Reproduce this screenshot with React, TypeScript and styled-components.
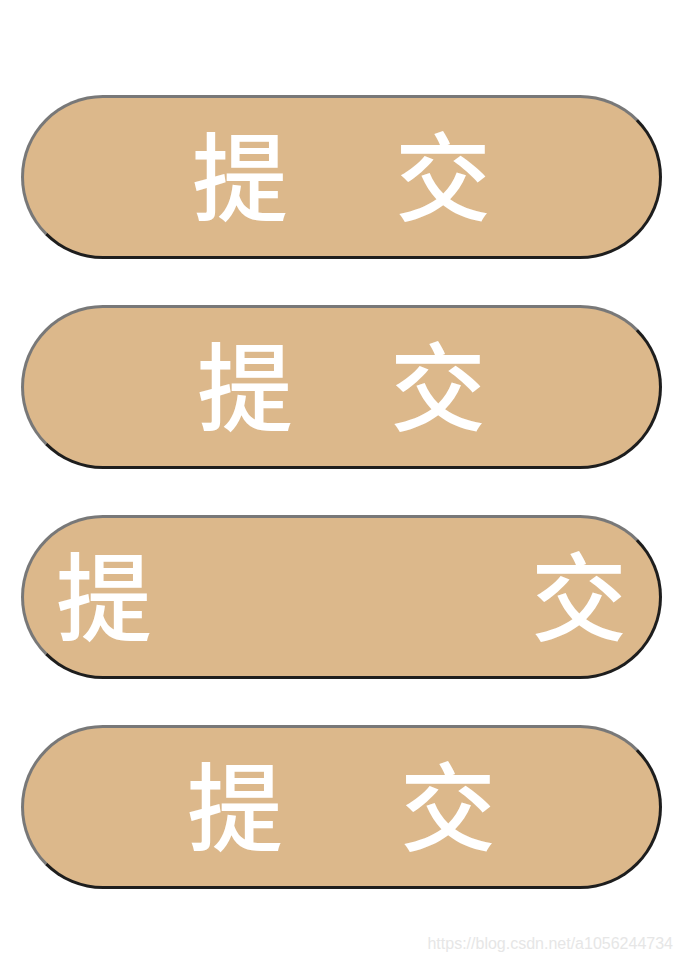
import styled, { createGlobalStyle } from "styled-components";

const Global = createGlobalStyle`
  html, body {
    margin: 0;
    padding: 0;
    background: #ffffff;
  }
`;

const Page = styled.div`
  width: 682px;
  height: 962px;
  box-sizing: border-box;
  padding: 95px 20px 0 21px;
  display: flex;
  flex-direction: column;
  gap: 46px;
  position: relative;
  font-family: "Noto Sans CJK SC", "Noto Sans", sans-serif;
`;

const SubmitButton = styled.button<{ $gap?: number; $spread?: boolean }>`
  height: 164px;
  width: 100%;
  box-sizing: border-box;
  border-radius: 82px;
  border: 3px solid;
  border-color: #787878 #1e1e1e #1e1e1e #787878;
  background: #dcb88b;
  color: #ffffff;
  font-family: inherit;
  font-size: 96px;
  font-weight: 500;
  line-height: 1;
  display: flex;
  align-items: center;
  justify-content: ${({ $spread }) => ($spread ? "space-between" : "center")};
  gap: ${({ $gap }) => $gap ?? 0}px;
  padding: 0 ${({ $spread }) => ($spread ? 32 : 0)}px 10px;
  cursor: pointer;
`;

const Char = styled.span`
  display: block;
`;

const Watermark = styled.div`
  position: absolute;
  right: 9px;
  bottom: 9px;
  font-family: "Liberation Sans", Arial, sans-serif;
  font-size: 16px;
  color: #e6e6e6;
`;

const BUTTONS = [
  { gap: 107 },
  { gap: 97 },
  { spread: true },
  { gap: 117 },
];

export default function App() {
  return (
    <>
      <Global />
      <Page>
        {BUTTONS.map((b, i) => (
          <SubmitButton key={i} $gap={b.gap} $spread={b.spread}>
            <Char>提</Char>
            <Char>交</Char>
          </SubmitButton>
        ))}
        <Watermark>https://blog.csdn.net/a1056244734</Watermark>
      </Page>
    </>
  );
}
